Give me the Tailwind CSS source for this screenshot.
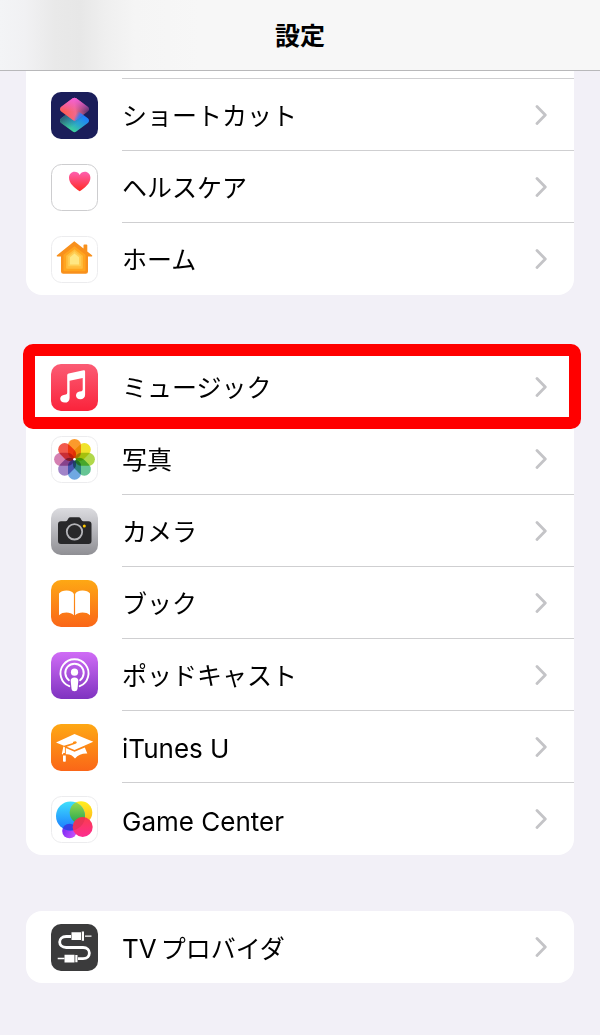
<!DOCTYPE html>
<html lang="ja">

<head>
    <meta charset="UTF-8" />
    <meta name="viewport" content="width=device-width, initial-scale=1.0" />
    <title>設定</title>
    <script src="https://cdn.jsdelivr.net/npm/@tailwindcss/browser@4"></script>
</head>

<body class="bg-[#f2f0f7] min-h-screen text-black text-[25px] font-['Inter','Noto_Sans_CJK_JP',sans-serif]">

    <!-- Shared chevron -->
    <svg class="hidden">
        <symbol id="chevron" viewBox="0 0 12 20">
            <path d="M2 1.5 10.3 10 2 18.5" fill="none" stroke="#c4c4c7" stroke-width="2.8" stroke-linecap="round" stroke-linejoin="round" />
        </symbol>
    </svg>

    <header class="sticky top-0 z-20 h-[71px] border-b border-[#b8b8ba] flex items-center justify-center bg-[#f7f7f7] bg-[linear-gradient(90deg,#f3f4f6_0px,#f1f1f3_25px,#e9e9e9_55px,#e7e7e7_80px,#efefef_105px,#f5f5f5_135px,#f7f7f7_200px)]">
        <h1 class="font-bold text-[25px] leading-9 pt-0.5">設定</h1>
    </header>

    <main class="px-[26px] pb-[52px] space-y-14">

        <ul class="bg-white rounded-b-2xl">
            <li class="pl-24">
                <div class="h-2 border-b border-[#cfcfd1]"></div>
            </li>
            <li>
                <a href="#shortcuts" class="flex items-center gap-6 pl-[25px]">
                    <svg class="size-[47px] shrink-0" viewBox="0 0 47 47">
                        <defs>
                            <linearGradient id="scTop" x1="0.1" y1="0.6" x2="0.95" y2="0.5">
                                <stop offset="0" stop-color="#ff5b52" />
                                <stop offset="0.5" stop-color="#f2688c" />
                                <stop offset="1" stop-color="#5e3470" />
                            </linearGradient>
                            <linearGradient id="scPink" x1="0" y1="0" x2="0" y2="1">
                                <stop offset="0" stop-color="#f35fd9" />
                                <stop offset="0.6" stop-color="#f35fd9" stop-opacity="0" />
                            </linearGradient>
                            <linearGradient id="scBottom" x1="0.3" y1="0.9" x2="0.8" y2="0.3">
                                <stop offset="0" stop-color="#3fd694" />
                                <stop offset="0.5" stop-color="#2ba5cc" />
                                <stop offset="1" stop-color="#1c80ff" />
                            </linearGradient>
                            <linearGradient id="scShade" x1="0" y1="0.2" x2="0.5" y2="0.7">
                                <stop offset="0" stop-color="#2c4a6a" />
                                <stop offset="0.35" stop-color="#2c5a70" stop-opacity="0.8" />
                                <stop offset="1" stop-color="#2c6a80" stop-opacity="0" />
                            </linearGradient>
                            <linearGradient id="scFade" x1="0.5" y1="0" x2="0.85" y2="0.3">
                                <stop offset="0" stop-color="#4f7fe0" stop-opacity="0" />
                                <stop offset="1" stop-color="#2a7dff" stop-opacity="0.9" />
                            </linearGradient>
                        </defs>
                        <rect width="47" height="47" rx="10" fill="#1b1e5a" />
                        <path d="M21.7 17.8A3 3 0 0 1 25.3 17.8L36.8 26.3A3 3 0 0 1 36.8 31.1L25.3 39.6A3 3 0 0 1 21.7 39.6L10.2 31.1A3 3 0 0 1 10.2 26.3z" fill="url(#scBottom)" />
                        <path d="M21.7 17.8A3 3 0 0 1 25.3 17.8L36.8 26.3A3 3 0 0 1 36.8 31.1L25.3 39.6A3 3 0 0 1 21.7 39.6L10.2 31.1A3 3 0 0 1 10.2 26.3z" fill="url(#scShade)" />
                        <path d="M21.7 6.3A3 3 0 0 1 25.3 6.3L36.8 14.8A3 3 0 0 1 36.8 19.6L25.3 28.1A3 3 0 0 1 21.7 28.1L10.2 19.6A3 3 0 0 1 10.2 14.8z" fill="url(#scTop)" />
                        <path d="M21.7 6.3A3 3 0 0 1 25.3 6.3L36.8 14.8A3 3 0 0 1 36.8 19.6L25.3 28.1A3 3 0 0 1 21.7 28.1L10.2 19.6A3 3 0 0 1 10.2 14.8z" fill="url(#scPink)" />
                        <path d="M23.5 17.2A3 3 0 0 1 25.3 17.8L32.3 22.9 25.3 28.1A3 3 0 0 1 23.5 28.7z" fill="url(#scFade)" />
                    </svg>
                    <span class="flex-1 h-[72px] flex items-center justify-between border-b border-[#cfcfd1] pr-[27px]">
                        <span class="pt-1">ショートカット</span>
                        <svg class="w-3 h-5"><use href="#chevron" /></svg>
                    </span>
                </a>
            </li>
            <li>
                <a href="#health" class="flex items-center gap-6 pl-[25px]">
                    <svg class="size-[47px] shrink-0" viewBox="0 0 47 47">
                        <defs>
                            <linearGradient id="heart" x1="0" y1="0" x2="0" y2="1">
                                <stop offset="0" stop-color="#ff5fb0" />
                                <stop offset="1" stop-color="#ff2a22" />
                            </linearGradient>
                        </defs>
                        <rect x="0.5" y="0.5" width="46" height="46" rx="10" fill="#fff" stroke="#cdcdcf" />
                        <path d="M28.7 27.3C23.5 23.8 18 19.6 18 13.8 18 10.2 20.5 7.8 23.5 7.8c2.3 0 4.2 1.2 5.2 3.1 1-1.9 2.9-3.1 5.2-3.1 3 0 5.5 2.4 5.5 6 0 5.8-5.5 10-10.7 13.5z" fill="url(#heart)" />
                    </svg>
                    <span class="flex-1 h-[72px] flex items-center justify-between border-b border-[#cfcfd1] pr-[27px]">
                        <span class="pt-1">ヘルスケア</span>
                        <svg class="w-3 h-5"><use href="#chevron" /></svg>
                    </span>
                </a>
            </li>
            <li>
                <a href="#home" class="flex items-center gap-6 pl-[25px]">
                    <svg class="size-[47px] shrink-0" viewBox="0 0 47 47">
                        <rect x="0.5" y="0.5" width="46" height="46" rx="10" fill="#fff" stroke="#ececee" />
                        <path d="M23.3 5.3 32.5 12.5V9.3q0-.8.8-.8h2.2q.8 0 .8.8V15.6L41 19.3q.8 1-.3 1.2H37V35.5q0 2.3-2.3 2.3H12.3Q10 37.8 10 35.5V20.5H6.3q-1.1-.2-.3-1.2z" fill="#f8901c" />
                        <path d="M23.5 10.2 34.5 18.8V34.2q0 1-1 1H13.5q-1 0-1-1V18.8z" fill="#ffa51f" />
                        <path d="M23.5 13.2 31.8 19.8V31.8q0 .9-.9.9H16.1q-.9 0-.9-.9V19.8z" fill="#ffbd3e" />
                        <path d="M23.5 15.3 29.8 20.5V29.5q0 .8-.8.8H18q-.8 0-.8-.8V20.5z" fill="#ffcf55" />
                        <path d="M23.5 17.5 28 21.3V28.5H19V21.3z" fill="#ffe783" />
                    </svg>
                    <span class="flex-1 h-[72px] flex items-center justify-between pr-[27px]">
                        <span class="pt-1">ホーム</span>
                        <svg class="w-3 h-5"><use href="#chevron" /></svg>
                    </span>
                </a>
            </li>
        </ul>

        <ul class="bg-white rounded-2xl">
            <li class="relative">
                <!-- Highlight frame around the row -->
                <div class="absolute -top-[7px] -bottom-[6px] -left-[3px] -right-[7px] z-10 border-12 border-[#ff0000] rounded-[10px] pointer-events-none"></div>
                <a href="#music" class="flex items-center gap-6 pl-[25px]">
                    <svg class="size-[47px] shrink-0" viewBox="0 0 47 47">
                        <defs>
                            <linearGradient id="music" x1="0" y1="0" x2="0" y2="1">
                                <stop offset="0" stop-color="#fb5c74" />
                                <stop offset="1" stop-color="#fa233b" />
                            </linearGradient>
                        </defs>
                        <rect width="47" height="47" rx="10" fill="url(#music)" />
                        <path d="M16.2 11.2q0-1.5 1.5-1.8L32.6 6.2q1.5-.3 1.5 1.2V30.8C34.1 33.8 32 35.2 29.4 35.2 26.8 35.2 25 33.7 25 31.5 25 29.3 26.5 28 28.5 27.6L30.5 27.2Q31.7 26.9 31.7 25.6V14L18.6 16.7V33.9C18.6 37 16.5 38.6 13.8 38.6 11 38.6 9.2 37 9.2 34.8 9.2 32.7 10.6 31.3 12.7 30.9L14.8 30.5Q16.2 30.2 16.2 28.8z" fill="#fff" />
                    </svg>
                    <span class="flex-1 h-[72px] flex items-center justify-between border-b border-[#cfcfd1] pr-[27px]">
                        <span class="pt-1">ミュージック</span>
                        <svg class="w-3 h-5"><use href="#chevron" /></svg>
                    </span>
                </a>
            </li>
            <li>
                <a href="#photos" class="flex items-center gap-6 pl-[25px]">
                    <svg class="size-[47px] shrink-0" viewBox="0 0 47 47">
                        <rect x="0.5" y="0.5" width="46" height="46" rx="10" fill="#fff" stroke="#ececee" />
                        <g transform="translate(23.5 23.3)">
                            <rect x="-6.5" y="-20.4" width="13" height="20" rx="6.5" fill="#fb9a2c" class="mix-blend-multiply" />
                            <rect x="-6.5" y="-20.4" width="13" height="20" rx="6.5" fill="#f0e32c" class="mix-blend-multiply" transform="rotate(45)" />
                            <rect x="-6.5" y="-20.4" width="13" height="20" rx="6.5" fill="#b0d84a" class="mix-blend-multiply" transform="rotate(90)" />
                            <rect x="-6.5" y="-20.4" width="13" height="20" rx="6.5" fill="#66c594" class="mix-blend-multiply" transform="rotate(135)" />
                            <rect x="-6.5" y="-20.4" width="13" height="20" rx="6.5" fill="#70a8e2" class="mix-blend-multiply" transform="rotate(180)" />
                            <rect x="-6.5" y="-20.4" width="13" height="20" rx="6.5" fill="#a184c8" class="mix-blend-multiply" transform="rotate(225)" />
                            <rect x="-6.5" y="-20.4" width="13" height="20" rx="6.5" fill="#d480b2" class="mix-blend-multiply" transform="rotate(270)" />
                            <rect x="-6.5" y="-20.4" width="13" height="20" rx="6.5" fill="#f2594c" class="mix-blend-multiply" transform="rotate(315)" />
                            <circle r="1.3" fill="#fff" />
                        </g>
                    </svg>
                    <span class="flex-1 h-[72px] flex items-center justify-between border-b border-[#cfcfd1] pr-[27px]">
                        <span class="pt-1">写真</span>
                        <svg class="w-3 h-5"><use href="#chevron" /></svg>
                    </span>
                </a>
            </li>
            <li>
                <a href="#camera" class="flex items-center gap-6 pl-[25px]">
                    <svg class="size-[47px] shrink-0" viewBox="0 0 47 47">
                        <defs>
                            <linearGradient id="camera" x1="0" y1="0" x2="0" y2="1">
                                <stop offset="0" stop-color="#dcdce0" />
                                <stop offset="1" stop-color="#8f8f94" />
                            </linearGradient>
                        </defs>
                        <rect width="47" height="47" rx="10" fill="url(#camera)" />
                        <path d="M10 13.3H14.5Q15.8 13.3 16.5 12L17.3 10.5Q18 9.3 19.5 9.3H27.5Q29 9.3 29.7 10.5L30.5 12Q31.2 13.3 32.5 13.3H37.5Q40.5 13.3 40.5 16.3V33Q40.5 36 37.5 36H10Q7 36 7 33V16.3Q7 13.3 10 13.3z" fill="#28282a" />
                        <circle cx="23.5" cy="23.8" r="7.7" fill="#28282a" stroke="#b4b4b8" stroke-width="1.8" />
                        <circle cx="33.3" cy="17.9" r="1.5" fill="#ffc800" />
                    </svg>
                    <span class="flex-1 h-[72px] flex items-center justify-between border-b border-[#cfcfd1] pr-[27px]">
                        <span class="pt-1">カメラ</span>
                        <svg class="w-3 h-5"><use href="#chevron" /></svg>
                    </span>
                </a>
            </li>
            <li>
                <a href="#books" class="flex items-center gap-6 pl-[25px]">
                    <svg class="size-[47px] shrink-0" viewBox="0 0 47 47">
                        <defs>
                            <linearGradient id="orange" x1="0" y1="0" x2="0" y2="1">
                                <stop offset="0" stop-color="#fea814" />
                                <stop offset="1" stop-color="#fa6618" />
                            </linearGradient>
                        </defs>
                        <rect width="47" height="47" rx="10" fill="url(#orange)" />
                        <path d="M8 13.5C9.5 11.5 12 10.4 15.5 10.4 19.3 10.4 21.8 11.8 22.9 14V35.2C21 33.4 18.5 32.6 15.5 32.6 12.5 32.6 10 33.3 8 35.2z" fill="#fff" />
                        <path d="M39 13.5C37.5 11.5 35 10.4 31.5 10.4 27.7 10.4 25.2 11.8 24.1 14V35.2C26 33.4 28.5 32.6 31.5 32.6 34.5 32.6 37 33.3 39 35.2z" fill="#fff" />
                    </svg>
                    <span class="flex-1 h-[72px] flex items-center justify-between border-b border-[#cfcfd1] pr-[27px]">
                        <span class="pt-1">ブック</span>
                        <svg class="w-3 h-5"><use href="#chevron" /></svg>
                    </span>
                </a>
            </li>
            <li>
                <a href="#podcasts" class="flex items-center gap-6 pl-[25px]">
                    <svg class="size-[47px] shrink-0" viewBox="0 0 47 47">
                        <defs>
                            <linearGradient id="podcast" x1="0" y1="0" x2="0" y2="1">
                                <stop offset="0" stop-color="#d06cf6" />
                                <stop offset="1" stop-color="#7f33c0" />
                            </linearGradient>
                        </defs>
                        <rect width="47" height="47" rx="10" fill="url(#podcast)" />
                        <g fill="none" stroke="#fff" stroke-width="1.9" stroke-linecap="round">
                            <path d="M18.3 34.2A14 14 0 1 1 28.7 34.2" />
                            <path d="M17.9 28.2A9.2 9.2 0 1 1 29.1 28.2" />
                        </g>
                        <circle cx="23.5" cy="20.2" r="3.6" fill="#fff" />
                        <path d="M23.5 25.5c2.6 0 4 1.2 3.8 3.6l-.8 7.7c-.2 1.7-1.3 2.5-3 2.5s-2.8-.8-3-2.5l-.8-7.7c-.2-2.4 1.2-3.6 3.8-3.6z" fill="#fff" />
                    </svg>
                    <span class="flex-1 h-[72px] flex items-center justify-between border-b border-[#cfcfd1] pr-[27px]">
                        <span class="pt-1">ポッドキャスト</span>
                        <svg class="w-3 h-5"><use href="#chevron" /></svg>
                    </span>
                </a>
            </li>
            <li>
                <a href="#itunesu" class="flex items-center gap-6 pl-[25px]">
                    <svg class="size-[47px] shrink-0" viewBox="0 0 47 47">
                        <rect width="47" height="47" rx="10" fill="url(#orange)" />
                        <path d="M23.5 10 42.3 17.8 23.5 26 15.8 22.8 24.5 19.7C26 19.6 26.3 17.3 24.3 17.2 22.7 17.1 21.6 18.2 21.9 18.9L13 21.8 5 18.6z" fill="#fff" />
                        <path d="M14.8 24 23.5 27.7 33.8 23.4 36.3 29.5C31.5 29.2 27 30.8 24 34.5 21.5 31.3 18.5 29.9 14.8 30.3z" fill="#fff" />
                        <path d="M12.4 22.6 13.9 23.2V29H12.3L12 30.5 10.8 30z" fill="#fff" />
                        <path d="M12 31.5H14.8V37.2Q13.4 38.2 12 37.2z" fill="#fff" />
                    </svg>
                    <span class="flex-1 h-[72px] flex items-center justify-between border-b border-[#cfcfd1] pr-[27px]">
                        <span class="pt-1 text-[26px]">iTunes U</span>
                        <svg class="w-3 h-5"><use href="#chevron" /></svg>
                    </span>
                </a>
            </li>
            <li>
                <a href="#gamecenter" class="flex items-center gap-6 pl-[25px]">
                    <svg class="size-[47px] shrink-0" viewBox="0 0 47 47">
                        <defs>
                            <linearGradient id="gcBlue" x1="0" y1="0" x2="0" y2="1">
                                <stop offset="0" stop-color="#3fe0fb" />
                                <stop offset="1" stop-color="#1a78ff" />
                            </linearGradient>
                            <linearGradient id="gcYellow" x1="0" y1="0" x2="0" y2="1">
                                <stop offset="0" stop-color="#fff01e" />
                                <stop offset="1" stop-color="#ffae1c" />
                            </linearGradient>
                            <linearGradient id="gcGreen" x1="0" y1="0" x2="0" y2="1">
                                <stop offset="0" stop-color="#9edc4e" />
                                <stop offset="1" stop-color="#1fa550" />
                            </linearGradient>
                            <linearGradient id="gcPurple" x1="0" y1="0" x2="1" y2="0.5">
                                <stop offset="0" stop-color="#6b22f5" />
                                <stop offset="1" stop-color="#c550fa" />
                            </linearGradient>
                            <linearGradient id="gcPink" x1="0" y1="0" x2="0" y2="1">
                                <stop offset="0" stop-color="#fb3c4e" />
                                <stop offset="1" stop-color="#fd2c90" />
                            </linearGradient>
                            <clipPath id="gcClip"><circle cx="19.5" cy="20" r="14.5" /></clipPath>
                        </defs>
                        <rect x="0.5" y="0.5" width="46" height="46" rx="10" fill="#fff" stroke="#ececee" />
                        <circle cx="18.5" cy="35" r="7.3" fill="url(#gcPurple)" />
                        <circle cx="30" cy="16.5" r="11.3" fill="url(#gcYellow)" />
                        <circle cx="19.5" cy="20" r="14.5" fill="url(#gcBlue)" />
                        <g clip-path="url(#gcClip)">
                            <circle cx="30" cy="16.5" r="11.3" fill="url(#gcGreen)" />
                            <circle cx="18.5" cy="35" r="7.3" fill="#3a30e0" opacity="0.8" />
                        </g>
                        <circle cx="31.7" cy="31" r="10" fill="url(#gcPink)" />
                        <circle cx="31.7" cy="31" r="10" fill="#d83050" opacity="0.5" clip-path="url(#gcClip)" />
                    </svg>
                    <span class="flex-1 h-[72px] flex items-center justify-between pr-[27px]">
                        <span class="pt-1 text-[26px]">Game Center</span>
                        <svg class="w-3 h-5"><use href="#chevron" /></svg>
                    </span>
                </a>
            </li>
        </ul>

        <ul class="bg-white rounded-2xl">
            <li>
                <a href="#tvprovider" class="flex items-center gap-6 pl-[25px]">
                    <svg class="size-[47px] shrink-0" viewBox="0 0 47 47">
                        <rect width="47" height="47" rx="10" fill="#3b3b3c" />
                        <path d="M20 12.5H15.2C6.5 12.5 6.5 23.5 15.2 23.5H32C40.5 23.5 40.5 34.7 32 34.7H27" fill="none" stroke="#fff" stroke-width="2.8" />
                        <path d="M20.5 8.3H30V16H20.5zM30.8 7.6H33V16.7H30.8z" fill="#fff" />
                        <path d="M34 12.1H40.5M6.7 34.5H13.5" stroke="#fff" stroke-width="1.4" />
                        <path d="M13.5 30.7H23.5V38.5H13.5zM24.3 31H26.5V38.2H24.3z" fill="#fff" />
                    </svg>
                    <span class="flex-1 h-[72px] flex items-center justify-between pr-[27px]">
                        <span class="pt-1"><span class="text-[26px] mr-1">TV</span>プロバイダ</span>
                        <svg class="w-3 h-5"><use href="#chevron" /></svg>
                    </span>
                </a>
            </li>
        </ul>
    </main>
</body>

</html>
